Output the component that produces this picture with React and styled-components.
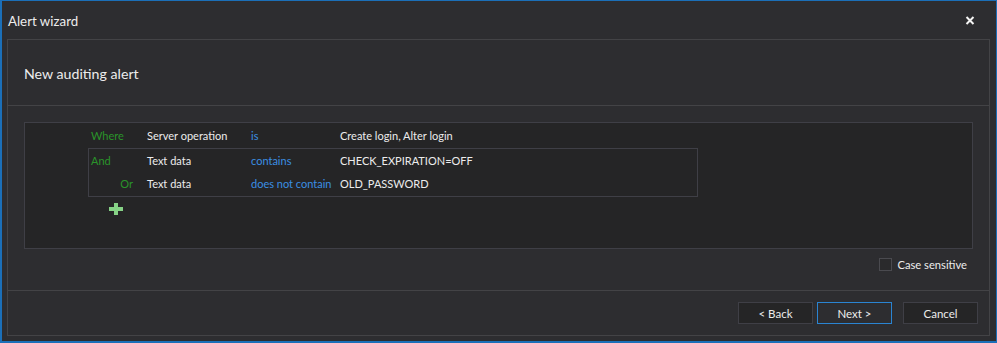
import React from 'react'
import styled, { createGlobalStyle } from 'styled-components'

const GlobalStyle = createGlobalStyle`
    html, body {
        margin : 0;
        padding : 0;
        background : #2d2d30;
    }
    body {
        font-family : Lato, "Liberation Sans", sans-serif;
        color : #ececec;
    }
`

const rows = [
    { id : 1, keyword : 'Where', field : 'Server operation', op : 'is', value : 'Create login, Alter login' },
]

const groupRows = [
    { id : 2, keyword : 'And', field : 'Text data', op : 'contains', value : 'CHECK_EXPIRATION=OFF' },
    { id : 3, keyword : 'Or', field : 'Text data', op : 'does not contain', value : 'OLD_PASSWORD', right : true },
]

function CondRow({ keyword, field, op, value, right }) {
    return (
        <Row>
            <Keyword $right={right}>{keyword}</Keyword>
            <Field>{field}</Field>
            <Operator>{op}</Operator>
            <Value>{value}</Value>
        </Row>
    )
}

function App() {
    return (
        <Window>
            <GlobalStyle />
            <TitleBar>
                <Title>Alert wizard</Title>
                <Close>
                    <svg width="10" height="9" viewBox="0 0 10 9">
                        <path d="M1.5 1 L8.5 8 M8.5 1 L1.5 8" stroke="#f4f4f4" strokeWidth="2" />
                    </svg>
                </Close>
            </TitleBar>
            <Panel>
                <Header>New auditing alert</Header>
                <Body>
                    <Conditions>
                        {rows.map(r => <CondRow key={r.id} {...r} />)}
                        <Group>
                            {groupRows.map(r => <CondRow key={r.id} {...r} />)}
                        </Group>
                        <AddButton>
                            <svg width="14" height="12" viewBox="0 0 14 12">
                                <path d="M5 0 H9 V4 H14 V8 H9 V12 H5 V8 H0 V4 H5 Z" fill="#86d286" />
                            </svg>
                        </AddButton>
                    </Conditions>
                    <Options>
                        <Check />
                        <CheckLabel>Case sensitive</CheckLabel>
                    </Options>
                </Body>
                <Footer>
                    <Button>&lt; Back</Button>
                    <Button $primary>Next &gt;</Button>
                    <Button $gap>Cancel</Button>
                </Footer>
            </Panel>
        </Window>
    )
}

export default App

const Window = styled.div`
    width : 997px;
    height : 343px;
    box-sizing : border-box;
    border : 1px solid #1b6fb8;
    border-left-width : 2px;
    border-bottom-width : 2px;
    background : #2d2d30;
    display : flex;
    flex-direction : column;
    padding : 0 6px 5px 5px;
`

const TitleBar = styled.div`
    height : 38px;
    display : flex;
    align-items : center;
    justify-content : space-between;
    flex-shrink : 0;
`

const Title = styled.div`
    font-size : 13.3px;
    margin-left : 1px;
    margin-top : 1px;
    color : #ececec;
`

const Close = styled.div`
    width : 10px;
    height : 9px;
    margin-right : 15px;
    display : flex;
`

const Panel = styled.div`
    flex : 1;
    border : 1px solid #434346;
    display : flex;
    flex-direction : column;
`

const Header = styled.div`
    height : 66px;
    box-sizing : border-box;
    border-bottom : 1px solid #434346;
    display : flex;
    align-items : center;
    padding-left : 16px;
    padding-top : 2px;
    font-size : 14.2px;
    color : #ececec;
`

const Body = styled.div`
    padding : 16px 16px 0 16px;
    border-bottom : 1px solid #434346;
    height : 185px;
    box-sizing : border-box;
    flex-shrink : 0;
`

const Conditions = styled.div`
    height : 127px;
    box-sizing : border-box;
    background : #252526;
    border : 1px solid #3f3f46;
    padding : 1px 0 0 66px;
    font-size : 11px;
`

const Group = styled.div`
    width : 606px;
    margin-left : -3px;
    padding-left : 2px;
    border : 1px solid #3f3f46;
`

const Row = styled.div`
    height : 23.5px;
    display : flex;
    align-items : center;
    white-space : nowrap;
`

const Keyword = styled.div`
    width : 56px;
    box-sizing : border-box;
    color : #2a942a;
    text-align : ${p => p.$right ? 'right' : 'left'};
    padding-right : ${p => p.$right ? '14px' : '0'};
`

const Field = styled.div`
    width : 104px;
    color : #ececec;
`

const Operator = styled.div`
    width : 89px;
    color : #3b8fe3;
`

const Value = styled.div`
    color : #ececec;
`

const AddButton = styled.div`
    margin : 6px 0 0 18px;
    display : flex;
`

const Options = styled.div`
    display : flex;
    justify-content : flex-end;
    align-items : center;
    margin-top : 9px;
    padding-right : 6px;
`

const Check = styled.div`
    width : 11px;
    height : 11px;
    border : 1px solid #4a4a4f;
    background : #2a2a2c;
`

const CheckLabel = styled.div`
    font-size : 11.2px;
    margin-left : 5px;
    color : #ececec;
`

const Footer = styled.div`
    flex : 1;
    display : flex;
    justify-content : flex-end;
    align-items : flex-start;
    padding : 11px 11px 0 0;
    gap : 4px;
`

const Button = styled.div`
    width : 75px;
    height : 22px;
    box-sizing : border-box;
    display : flex;
    align-items : center;
    justify-content : center;
    font-size : 11.5px;
    color : #ececec;
    background : ${p => p.$primary ? '#2d2d30' : '#252526'};
    border : 1px solid ${p => p.$primary ? '#2a84d2' : '#3f3f46'};
    margin-left : ${p => p.$gap ? '7px' : '0'};
`
